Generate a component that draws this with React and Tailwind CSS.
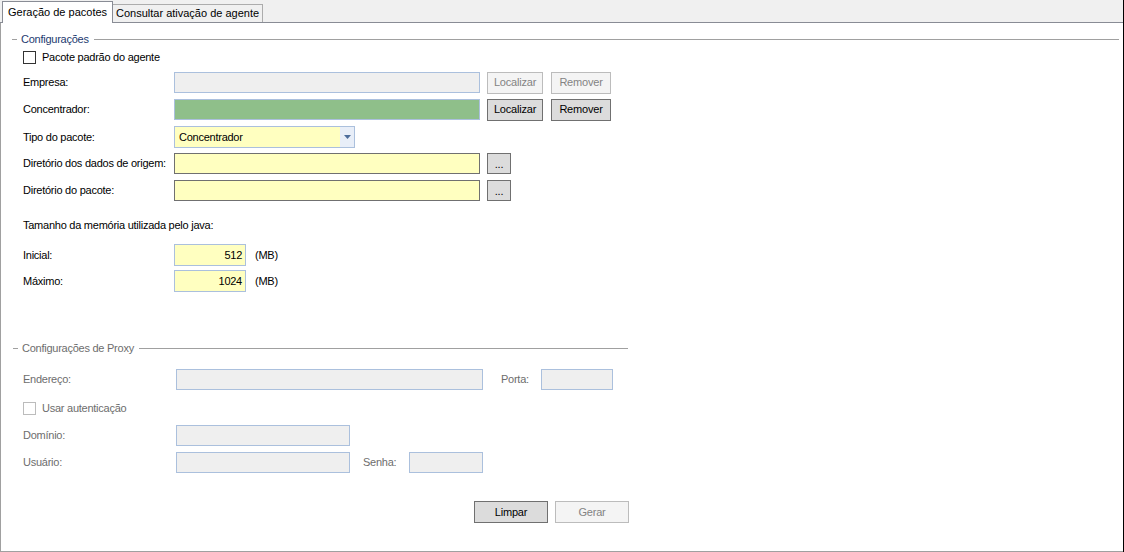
import React, { useState } from 'react';

const Box = ({ w, bg = 'bg-[#efefef]', border = 'border-[#abc0dd]', h = 'h-[21px]', children, className = '' }) => (
  <div className={`${w} ${h} ${bg} border ${border} shrink-0 ${className}`}>{children}</div>
);

const Btn = ({ w, enabled, children }) => (
  <button
    className={`${w} h-[22px] shrink-0 border text-[11px] leading-none tracking-[-0.2px] ${
      enabled ? 'border-[#707070] bg-[#dcdcdc] text-black' : 'border-[#bcbcbc] bg-[#f4f4f4] text-[#838383]'
    }`}
  >
    {children}
  </button>
);

const Check = ({ checked, onChange, disabled, label }) => (
  <label className={`flex items-center h-[13px] ${disabled ? 'text-[#6d6d6d]' : 'text-black'}`}>
    <span
      onClick={disabled ? undefined : onChange}
      className={`w-[13px] h-[13px] border bg-white flex items-center justify-center ${disabled ? 'border-[#bcbcbc]' : 'border-[#333333]'}`}
    >
      {checked && (
        <svg width="9" height="9" viewBox="0 0 9 9">
          <path d="M1 4.5 L3.5 7 L8 1.5" stroke="#333" strokeWidth="1.5" fill="none" />
        </svg>
      )}
    </span>
    <span className="ml-[6px]">{label}</span>
  </label>
);

const GroupHeader = ({ title, dashLeft, color, lineEnd }) => (
  <div className={`flex items-center h-[17px] ${lineEnd}`}>
    <div className={`${dashLeft} w-[5px] h-px bg-[#a0a0a0]`} />
    <span className={`ml-[3px] px-[1px] ${color}`}>{title}</span>
    <div className="ml-[4px] flex-1 h-px bg-[#a0a0a0]" />
  </div>
);

export default function App() {
  const [padrao, setPadrao] = useState(false);
  const [tab, setTab] = useState(0);

  return (
    <div className="w-[1124px] h-[552px] bg-white border-r border-black overflow-hidden text-[11px] tracking-[-0.25px] text-black font-['Liberation_Sans',Arial,sans-serif]">
      {/* tab strip */}
      <div className="h-[23px] bg-[#f0f0f0] border-b border-[#898c95] flex items-end">
        <div
          onClick={() => setTab(0)}
          className="ml-[2px] -mb-px w-[111px] h-[22px] bg-white border-t border-l border-r border-[#898c95] flex items-center pl-[5px] pb-[1px] tracking-normal"
        >
          Geração de pacotes
        </div>
        <div
          onClick={() => setTab(1)}
          className="w-[150px] h-[18px] bg-[#f0f0f0] border-t border-r border-[#acacac] flex items-center pl-[3px] tracking-normal"
        >
          Consultar ativação de agente
        </div>
      </div>

      {/* panel */}
      <div className="h-[529px] border-l border-b border-[#a0a0a0] flex flex-col">
        <div className="mt-[8px]">
          <GroupHeader title="Configurações" dashLeft="ml-[11px]" color="text-[#1d3a6f]" lineEnd="mr-[4px]" />
        </div>

        <div className="mt-[3px] pl-[22px]">
          <Check checked={padrao} onChange={() => setPadrao(!padrao)} label="Pacote padrão do agente" />
        </div>

        <div className="mt-[8px] pl-[22px] flex items-center h-[21px]">
          <span className="w-[151px] shrink-0">Empresa:</span>
          <Box w="w-[306px]" />
          <div className="ml-[7px] flex gap-[8px]">
            <Btn w="w-[56px]">Localizar</Btn>
            <Btn w="w-[60px]">Remover</Btn>
          </div>
        </div>

        <div className="mt-[6px] pl-[22px] flex items-center h-[21px]">
          <span className="w-[151px] shrink-0">Concentrador:</span>
          <Box w="w-[306px]" bg="bg-[#8fbf8a]" />
          <div className="ml-[7px] flex gap-[8px]">
            <Btn w="w-[56px]" enabled>Localizar</Btn>
            <Btn w="w-[60px]" enabled>Remover</Btn>
          </div>
        </div>

        <div className="mt-[6px] pl-[22px] flex items-center h-[22px]">
          <span className="w-[151px] shrink-0">Tipo do pacote:</span>
          <div className="w-[181px] h-[22px] border border-[#abc0dd] bg-[#ffffc0] flex">
            <span className="flex-1 flex items-center pl-[4px]">Concentrador</span>
            <span className="w-[14px] bg-[#e8eef8] flex items-center justify-center">
              <svg width="7" height="4" viewBox="0 0 7 4">
                <path d="M0 0 H7 L3.5 4 Z" fill="#4d6d9a" />
              </svg>
            </span>
          </div>
        </div>

        <div className="mt-[5px] pl-[22px] flex items-center h-[21px]">
          <span className="w-[151px] shrink-0">Diretório dos dados de origem:</span>
          <Box w="w-[306px]" bg="bg-[#ffffc0]" border="border-[#707070]" />
          <div className="ml-[7px]">
            <button className="w-[24px] h-[21px] border border-[#707070] bg-[#dcdcdc] flex items-end justify-center pb-[3px] leading-none">...</button>
          </div>
        </div>

        <div className="mt-[6px] pl-[22px] flex items-center h-[21px]">
          <span className="w-[151px] shrink-0">Diretório do pacote:</span>
          <Box w="w-[306px]" bg="bg-[#ffffc0]" border="border-[#707070]" />
          <div className="ml-[7px]">
            <button className="w-[24px] h-[21px] border border-[#707070] bg-[#dcdcdc] flex items-end justify-center pb-[3px] leading-none">...</button>
          </div>
        </div>

        <div className="mt-[17px] pl-[22px] h-[14px] flex items-center">Tamanho da memória utilizada pelo java:</div>

        <div className="mt-[12px] pl-[22px] flex items-center h-[22px]">
          <span className="w-[151px] shrink-0">Inicial:</span>
          <Box w="w-[72px]" h="h-[22px]" bg="bg-[#ffffc0]" className="flex items-center justify-end pr-[3px]">512</Box>
          <span className="ml-[9px]">(MB)</span>
        </div>

        <div className="mt-[4px] pl-[22px] flex items-center h-[22px]">
          <span className="w-[151px] shrink-0">Máximo:</span>
          <Box w="w-[72px]" h="h-[22px]" bg="bg-[#ffffc0]" className="flex items-center justify-end pr-[3px]">1024</Box>
          <span className="ml-[9px]">(MB)</span>
        </div>

        <div className="mt-[48px] w-[627px]">
          <GroupHeader title="Configurações de Proxy" dashLeft="ml-[12px]" color="text-[#6d6d6d]" lineEnd="" />
        </div>

        <div className="mt-[12px] pl-[22px] flex items-center h-[21px] text-[#6d6d6d]">
          <span className="w-[153px] shrink-0">Endereço:</span>
          <Box w="w-[307px]" />
          <span className="ml-[18px] w-[40px] shrink-0">Porta:</span>
          <Box w="w-[72px]" />
        </div>

        <div className="mt-[12px] pl-[22px]">
          <Check disabled label="Usar autenticação" />
        </div>

        <div className="mt-[10px] pl-[22px] flex items-center h-[21px] text-[#6d6d6d]">
          <span className="w-[153px] shrink-0">Domínio:</span>
          <Box w="w-[174px]" />
        </div>

        <div className="mt-[6px] pl-[22px] flex items-center h-[21px] text-[#6d6d6d]">
          <span className="w-[153px] shrink-0">Usuário:</span>
          <Box w="w-[174px]" />
          <span className="ml-[13px] w-[46px] shrink-0">Senha:</span>
          <Box w="w-[74px]" />
        </div>

        <div className="mt-[28px] pl-[473px] flex gap-[7px]">
          <Btn w="w-[74px]" enabled>Limpar</Btn>
          <Btn w="w-[74px]">Gerar</Btn>
        </div>
      </div>
    </div>
  );
}
